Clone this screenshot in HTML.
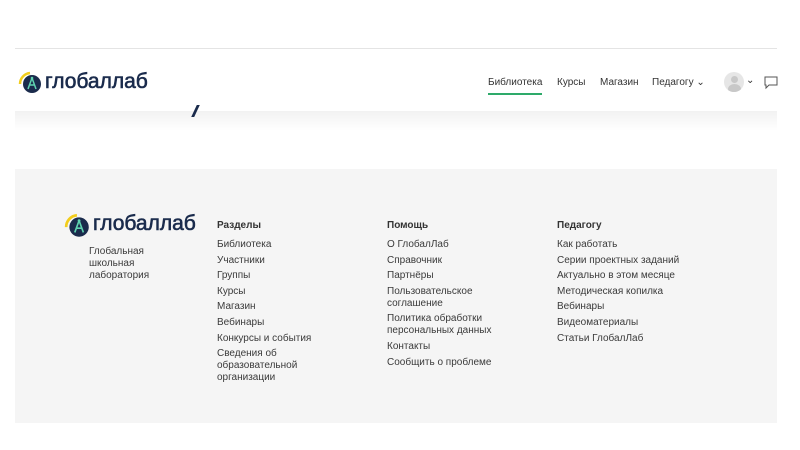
<!DOCTYPE html>
<html><head><meta charset="utf-8"><style>
*{margin:0;padding:0;box-sizing:border-box}
body{width:800px;height:450px;background:#fff;font-family:"Liberation Sans","Noto Sans CJK SC",sans-serif;position:relative;overflow:hidden;color:#333}
.abs{position:absolute}
.line{left:15px;top:48px;width:762px;height:1px;background:#e4e4e4}
.shadow{left:15px;top:111px;width:762px;height:20px;background:linear-gradient(#f2f2f2,#fff)}
.footer{left:15px;top:169px;width:762px;height:254px;background:#f5f5f5}
.nav{top:77px;font-size:10px;color:#333}
.col{font-size:10px;line-height:12px;color:#3a3a3a}
.col h4{font-size:10px;font-weight:bold;margin-bottom:7px;color:#333}
.col div{margin-bottom:3.6px}
.logo{color:#1a2b4c;-webkit-text-stroke:0.6px #1a2b4c;letter-spacing:0}
</style></head><body>
<div class="abs line"></div>
<div class="abs shadow"></div>
<div class="abs" style="left:194px;top:105px;width:3px;height:12px;background:#1a2b4c;transform:skewX(-25deg)"></div>

<svg class="abs" style="left:18px;top:70px" width="26" height="26" viewBox="0 0 26 26">
<path d="M2 14 A11 11 0 0 1 12 3" stroke="#f2cd1c" stroke-width="2.5" fill="none"/>
<circle cx="14" cy="14" r="9" fill="#1a2b4c"/>
<path d="M14 8 L10 19 M14 8 L18 19 M11.5 15 L16.5 15" stroke="#5fd3b0" stroke-width="1.5" fill="none"/>
<circle cx="14" cy="8" r="1.3" fill="#5fd3b0"/>
</svg>
<div class="abs logo" style="left:45px;top:70px;font-size:21px">глобаллаб</div>

<div class="abs nav" style="left:488px">Библиотека</div>
<div class="abs" style="left:488px;top:93px;width:54px;height:2px;background:#2eaa6a"></div>
<div class="abs nav" style="left:557px">Курсы</div>
<div class="abs nav" style="left:600px">Магазин</div>
<div class="abs nav" style="left:652px">Педагогу ⌄</div>
<div class="abs" style="left:724px;top:72px;width:20px;height:20px;border-radius:50%;background:#e6e6e6;overflow:hidden">
<div class="abs" style="left:7px;top:4px;width:7px;height:7px;border-radius:50%;background:#c8c8c8"></div>
<div class="abs" style="left:4px;top:12px;width:13px;height:10px;border-radius:50%;background:#c8c8c8"></div></div>
<div class="abs" style="left:746px;top:75px;font-size:10px">⌄</div>
<svg class="abs" style="left:764px;top:76px" width="14" height="14"><path d="M1 1 H13 V9 H5 L2 12 V9 H1 Z" stroke="#555" fill="none"/></svg>

<div class="abs footer"></div>
<svg class="abs" style="left:64px;top:212px" width="28" height="28" viewBox="0 0 26 26">
<path d="M2 14 A11 11 0 0 1 12 3" stroke="#f2cd1c" stroke-width="2.5" fill="none"/>
<circle cx="14" cy="14" r="9" fill="#1a2b4c"/>
<path d="M14 8 L10 19 M14 8 L18 19 M11.5 15 L16.5 15" stroke="#5fd3b0" stroke-width="1.5" fill="none"/>
<circle cx="14" cy="8" r="1.3" fill="#5fd3b0"/>
</svg>
<div class="abs logo" style="left:93px;top:212px;font-size:21px">глобаллаб</div>
<div class="abs col" style="left:89px;top:246px">Глобальная<br>школьная<br>лаборатория</div>

<div class="abs col" style="left:217px;top:220px">
<h4>Разделы</h4>
<div>Библиотека</div><div>Участники</div><div>Группы</div><div>Курсы</div><div>Магазин</div><div>Вебинары</div><div>Конкурсы и события</div><div>Сведения об<br>образовательной<br>организации</div></div>

<div class="abs col" style="left:387px;top:220px">
<h4>Помощь</h4>
<div>О ГлобалЛаб</div><div>Справочник</div><div>Партнёры</div><div>Пользовательское<br>соглашение</div><div>Политика обработки<br>персональных данных</div><div>Контакты</div><div>Сообщить о проблеме</div></div>

<div class="abs col" style="left:557px;top:220px">
<h4>Педагогу</h4>
<div>Как работать</div><div>Серии проектных заданий</div><div>Актуально в этом месяце</div><div>Методическая копилка</div><div>Вебинары</div><div>Видеоматериалы</div><div>Статьи ГлобалЛаб</div></div>
</body></html>
